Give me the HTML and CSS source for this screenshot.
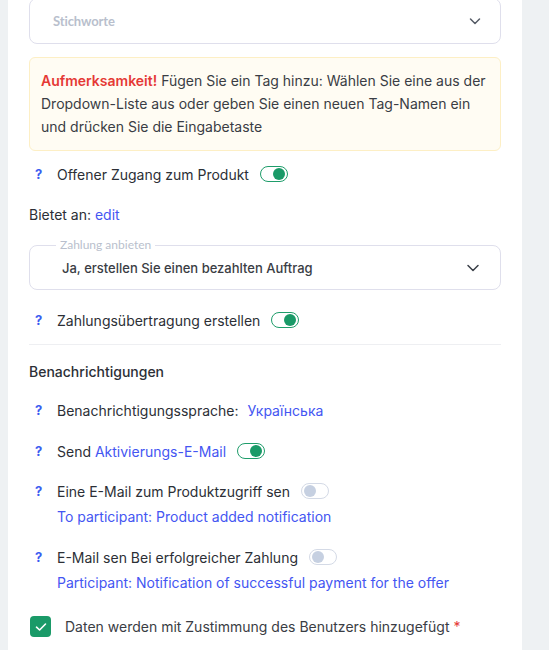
FILE: index.html
```html
<!DOCTYPE html>
<html lang="de">
<head>
<meta charset="utf-8">
<link rel="stylesheet" href="styles.css">
</head>
<body>
<div class="page">
  <div class="panel">
    <div class="select tags">
      <span class="placeholder">Stichworte</span>
      <svg class="chev" width="14" height="14" viewBox="0 0 14 14"><path d="M2.5 5 L7 9.5 L11.5 5" fill="none" stroke="#555b66" stroke-width="1.5" stroke-linecap="round" stroke-linejoin="round"/></svg>
    </div>

    <div class="alert">
      <b class="warn">Aufmerksamkeit!</b> Fügen Sie ein Tag hinzu: Wählen Sie eine aus der Dropdown-Liste aus oder geben Sie einen neuen Tag-Namen ein und drücken Sie die Eingabetaste
    </div>

    <div class="row r-open">
      <span class="q">?</span>
      <span class="label">Offener Zugang zum Produkt</span>
      <span class="toggle on"><span class="knob"></span></span>
    </div>

    <div class="offers">Bietet an: <a class="link">edit</a></div>

    <div class="outlined">
      <span class="float-label">Zahlung anbieten</span>
      <span class="value">Ja, erstellen Sie einen bezahlten Auftrag</span>
      <svg class="chev" width="14" height="14" viewBox="0 0 14 14"><path d="M2 4.5 L7 9.5 L12 4.5" fill="none" stroke="#3a3f48" stroke-width="1.5" stroke-linecap="round" stroke-linejoin="round"/></svg>
    </div>

    <div class="row r-pay">
      <span class="q">?</span>
      <span class="label">Zahlungsübertragung erstellen</span>
      <span class="toggle on"><span class="knob"></span></span>
    </div>

    <hr class="divider">

    <div class="heading">Benachrichtigungen</div>

    <div class="row r-lang">
      <span class="q">?</span>
      <span class="label">Benachrichtigungssprache:</span>
      <a class="link lang">Українська</a>
    </div>

    <div class="row r-send">
      <span class="q">?</span>
      <span class="label">Send <a class="link">Aktivierungs-E-Mail</a></span>
      <span class="toggle on"><span class="knob"></span></span>
    </div>

    <div class="row r-mail1">
      <span class="q">?</span>
      <span class="label">Eine E-Mail zum Produktzugriff sen</span>
      <span class="toggle off"><span class="knob"></span></span>
    </div>
    <a class="link sub">To participant: Product added notification</a>

    <div class="row r-mail2">
      <span class="q">?</span>
      <span class="label">E-Mail sen Bei erfolgreicher Zahlung</span>
      <span class="toggle off"><span class="knob"></span></span>
    </div>
    <a class="link sub">Participant: Notification of successful payment for the offer</a>

    <label class="consent">
      <span class="check"><svg width="12" height="10" viewBox="0 0 12 10"><path d="M1.5 5.2 L4.6 8 L10.5 2" fill="none" stroke="#fff" stroke-width="1.6" stroke-linecap="round" stroke-linejoin="round"/></svg></span>
      <span class="consent-text">Daten werden mit Zustimmung des Benutzers hinzugefügt <span class="req">*</span></span>
    </label>
  </div>
</div>
</body>
</html>
```

FILE: styles.css
```css
html, body {
  margin: 0;
  padding: 0;
  background: #eef1f3;
}
body {
  font-family: Inter, "Noto Sans", sans-serif;
  color: #2c2f36;
  font-size: 14px;
}
.page {
  width: 549px;
  height: 650px;
  overflow: hidden;
  padding-left: 8px;
  box-sizing: border-box;
}
.panel {
  width: 514px;
  box-sizing: border-box;
  background: #fff;
  padding: 0 21px 40px 21px;
  margin-top: -2px;
  min-height: 700px;
  display: flex;
  flex-direction: column;
}
.select {
  height: 46px;
  border: 1px solid #dfdfec;
  border-radius: 8px;
  box-sizing: border-box;
  display: flex;
  align-items: center;
  justify-content: space-between;
  padding: 0 18px 0 23px;
}
.placeholder {
  font-family: Lato, "Open Sans", sans-serif;
  font-weight: 700;
  font-size: 13px;
  letter-spacing: -0.1px;
  color: #b9bfcd;
}
.alert {
  margin-top: 13px;
  background: #fffcf3;
  border: 1px solid #fdefc5;
  border-radius: 6px;
  padding: 11px 12px 12px 11px;
  line-height: 23px;
  font-size: 14px;
  color: #3a3d44;
}
.warn {
  color: #e53935;
  font-weight: 600;
}
.row {
  display: flex;
  align-items: center;
  height: 22px;
}
.q {
  width: 28px;
  padding-left: 6px;
  box-sizing: border-box;
  color: #3b5cf0;
  font-weight: 700;
  font-size: 13px;
}
.label {
  color: #2c2f36;
}
.link {
  color: #4456f2;
  text-decoration: none;
}
.toggle {
  width: 28px;
  height: 16px;
  box-sizing: border-box;
  border-radius: 9px;
  margin-left: 11px;
  display: flex;
  align-items: center;
  padding: 0 2px;
}
.toggle .knob {
  width: 12px;
  height: 12px;
  border-radius: 50%;
}
.toggle.on {
  border: 1.5px solid #1f9d6b;
  justify-content: flex-end;
}
.toggle.on .knob {
  background: #1a9a68;
}
.toggle.off {
  border: 1.5px solid #d4dae6;
  justify-content: flex-start;
}
.toggle.off .knob {
  background: #c6d0e1;
}
.r-open { margin-top: 12px; }
.offers {
  margin-top: 19px;
  height: 22px;
  line-height: 22px;
}
.outlined {
  position: relative;
  margin-top: 19px;
  height: 45px;
  border: 1px solid #dfdfec;
  border-radius: 8px;
  box-sizing: border-box;
  padding: 0 20px 0 32px;
  display: flex;
  align-items: center;
  justify-content: space-between;
}
.float-label {
  position: absolute;
  top: -8px;
  left: 26px;
  background: #fff;
  font-family: Lato, "Open Sans", sans-serif;
  font-size: 12px;
  color: #b9bfcd;
  padding: 0 4px;
  line-height: 14px;
}
.value {
  font-size: 13px;
  font-weight: 500;
  color: #3a3d44;
}
.r-pay { margin-top: 19px; }
.divider {
  width: 100%;
  margin: 13px 0 0 0;
  border: 0;
  border-top: 1px solid #eeeff2;
}
.heading {
  margin-top: 16px;
  font-weight: 500;
  height: 22px;
  line-height: 22px;
}
.r-lang { margin-top: 16px; }
.lang { margin-left: 9px; }
.r-send { margin-top: 19px; }
.r-mail1 { margin-top: 18px; }
.sub {
  display: block;
  margin-top: 4px;
  padding-left: 28px;
  height: 22px;
  line-height: 22px;
}
.r-mail2 { margin-top: 18px; }
.consent {
  display: flex;
  align-items: center;
  margin-top: 22px;
  padding-left: 1px;
}
.check {
  width: 21px;
  height: 21px;
  border-radius: 4px;
  background: #1a9a68;
  display: flex;
  align-items: center;
  justify-content: center;
}
.consent-text {
  margin-left: 14px;
  color: #3a3d44;
}
.req { color: #e53935; }
```
